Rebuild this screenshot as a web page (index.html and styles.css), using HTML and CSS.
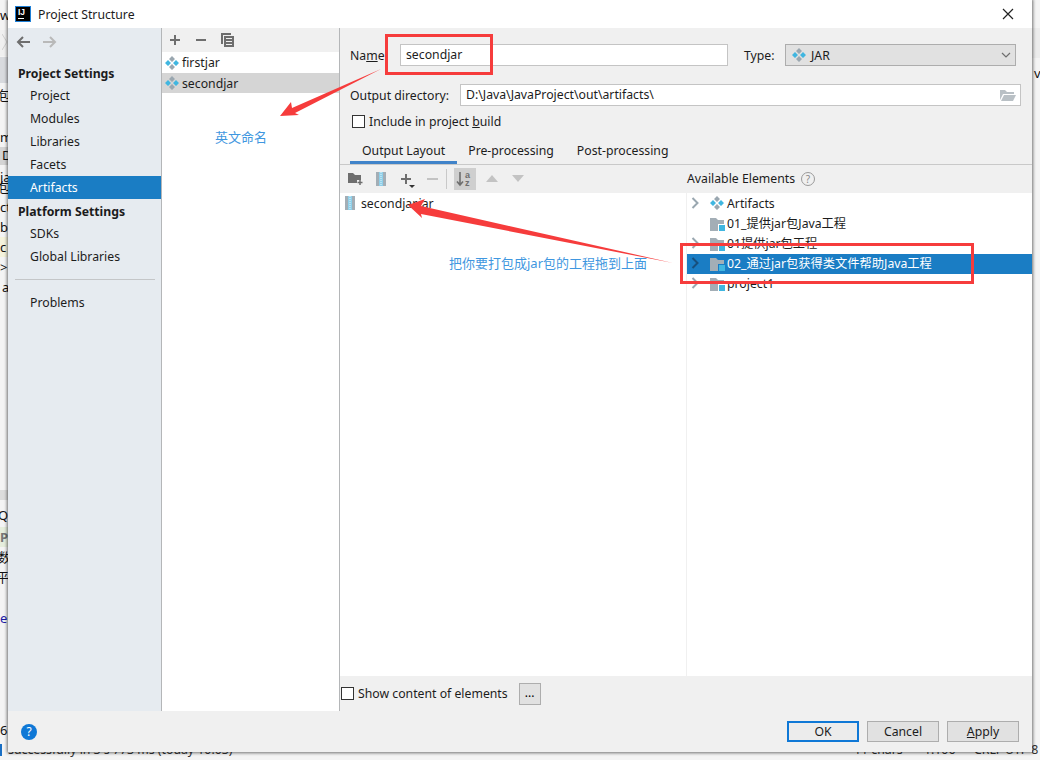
FILE: index.html
```html
<!DOCTYPE html>
<html lang="en">

<head>
    <meta charset="UTF-8">
    <meta name="viewport" content="width=device-width, initial-scale=1.0">
    <title>Project Structure</title>
    <link rel="stylesheet" href="styles.css">
</head>

<body>
    <svg class="defs" width="0" height="0">
        <symbol id="artifact" viewBox="0 0 14 14">
            <path fill="#9aa7b0" d="M7 0l3 3-3 3-3-3zM7 8l3 3-3 3-3-3z" />
            <path fill="#40b6e0" d="M3 4l3 3-3 3-3-3zM11 4l3 3-3 3-3-3z" />
        </symbol>
        <symbol id="module" viewBox="0 0 16 14">
            <path fill="#a3aeb6" d="M0 0h6l2 2h6v4H8v7H0z" />
            <path fill="#40b6e0" d="M9 7h6v6H9z" />
        </symbol>
        <symbol id="jar" viewBox="0 0 10 14">
            <path fill="#a3aeb6" d="M0 0h10v14H0z" />
            <path fill="#8fd0ea" d="M3 0h4v14H3z" />
            <path fill="none" stroke="#e8f4f8" stroke-dasharray="1 1" d="M5 0v14" />
        </symbol>
    </svg>

    <!-- bits of the window behind the dialog -->
    <div class="behind">
        <div class="strip strip-nav"></div>
        <div class="strip strip-tab"></div>
        <div class="strip strip-grey"></div>
        <div class="strip strip-cream"></div>
        <div class="strip strip-q"></div>
        <div class="strip strip-p"></div>
        <div class="strip strip-blue"></div>
        <div class="strip strip-right"></div>
        <svg class="nav-ghost" width="6" height="16" viewBox="0 0 6 16">
            <path fill="none" stroke="#cfcfcf" d="M0 0l5 8-5 8" />
        </svg>
        <span class="bit" style="left:0;top:7px">w</span>
        <span class="bit" style="left:-2px;top:87px">包</span>
        <span class="bit" style="left:0;top:129px">m</span>
        <span class="bit" style="left:2px;top:147px">D</span>
        <span class="bit bit-tight" style="left:0;top:172px">ja</span>
        <span class="bit bit-tight" style="left:-2px;top:182px">包</span>
        <span class="bit" style="left:0;top:199px">ct</span>
        <span class="bit" style="left:0;top:219px">b</span>
        <span class="bit" style="left:0;top:239px">c</span>
        <span class="bit" style="left:0;top:259px">&gt;</span>
        <span class="bit" style="left:2px;top:279px">a</span>
        <span class="bit" style="left:-2px;top:507px">Q</span>
        <span class="bit bit-p" style="left:0;top:529px">P</span>
        <span class="bit" style="left:-2px;top:549px">数</span>
        <span class="bit" style="left:-4px;top:569px">平</span>
        <span class="bit bit-link" style="left:0;top:610px">e</span>
        <span class="bit" style="left:0;top:722px">6:</span>
        <span class="bit" style="left:1034px;top:65px">va</span>
        <span class="bit status" style="left:8px;top:742px">successfully in 3 s 773 ms (today 10:03)</span>
        <span class="bit status" style="left:854px;top:742px">11 chars</span>
        <span class="bit status" style="left:924px;top:742px">1:106</span>
        <span class="bit status" style="left:974px;top:742px">CRLF</span>
        <span class="bit status" style="left:1005px;top:742px">UTF-8</span>
    </div>

    <div class="dialog">
        <div class="titlebar">
            <div class="logo"><span>IJ</span><i></i></div>
            <div class="title">Project Structure</div>
            <svg class="close" width="12" height="12" viewBox="0 0 12 12">
                <path fill="none" stroke="#222" stroke-width="1.200" d="M1 1l10 10M11 1L1 11" />
            </svg>
        </div>

        <div class="main">
            <div class="sidebar">
                <div class="nav-arrows">
                    <svg width="14" height="12" viewBox="0 0 14 12">
                        <path fill="none" stroke="#6e6e6e" stroke-width="2" d="M14 6H2M7 1L2 6l5 5" />
                    </svg>
                    <svg width="14" height="12" viewBox="0 0 14 12">
                        <path fill="none" stroke="#b9b9b9" stroke-width="2" d="M0 6h12M7 1l5 5-5 5" />
                    </svg>
                </div>
                <div class="side-head">Project Settings</div>
                <div class="side-item">Project</div>
                <div class="side-item">Modules</div>
                <div class="side-item">Libraries</div>
                <div class="side-item">Facets</div>
                <div class="side-item active">Artifacts</div>
                <div class="side-head">Platform Settings</div>
                <div class="side-item">SDKs</div>
                <div class="side-item">Global Libraries</div>
                <div class="side-sep"></div>
                <div class="side-item">Problems</div>
            </div>

            <div class="artifacts">
                <div class="mini-bar">
                    <svg width="12" height="12" viewBox="0 0 12 12">
                        <path fill="none" stroke="#6e6e6e" stroke-width="2" d="M6 1v10M1 6h10" />
                    </svg>
                    <svg width="12" height="12" viewBox="0 0 12 12">
                        <path fill="none" stroke="#6e6e6e" stroke-width="2" d="M1 6h10" />
                    </svg>
                    <svg width="13" height="14" viewBox="0 0 13 14">
                        <path fill="#6e6e6e" d="M0 0h10v2H2v9H0zM3 3h10v11H3z" />
                        <path fill="#f0f0f0" d="M5 5h6v1H5zM5 8h6v1H5zM5 11h6v1H5z" />
                    </svg>
                </div>
                <div class="artifact-list">
                    <div class="artifact-row first">
                        <svg class="ico"><use href="#artifact" /></svg>firstjar
                    </div>
                    <div class="artifact-row picked">
                        <svg class="ico"><use href="#artifact" /></svg>secondjar
                    </div>
                </div>
            </div>

            <div class="editor">
                <div class="form">
                    <div class="form-row">
                        <label class="name-label">Na<u>m</u>e:</label>
                        <div class="field name-field">secondjar</div>
                        <label class="type-label">Type:</label>
                        <div class="combo">
                            <svg class="ico"><use href="#artifact" /></svg>
                            <span>JAR</span>
                            <svg class="combo-arrow" width="10" height="6" viewBox="0 0 10 6">
                                <path fill="none" stroke="#6e6e6e" stroke-width="1.200" d="M1 1l4 4 4-4" />
                            </svg>
                        </div>
                    </div>
                    <div class="form-row">
                        <label class="dir-label">Output directory:</label>
                        <div class="field dir-field">
                            <span>D:\Java\JavaProject\out\artifacts\</span>
                            <svg width="16" height="12" viewBox="0 0 16 12">
                                <path fill="#b9c0c5" d="M0 1h5l2 2h7v2H3L0 11z" />
                                <path fill="#b9c0c5" d="M4 6h12l-3 6H1z" />
                            </svg>
                        </div>
                    </div>
                    <div class="check-row">
                        <span class="check"></span>
                        <label>Include in project <u>b</u>uild</label>
                    </div>
                </div>

                <div class="tabs">
                    <div class="tab current">Output Layout</div>
                    <div class="tab">Pre-processing</div>
                    <div class="tab">Post-processing</div>
                </div>

                <div class="layout-bars">
                    <div class="tools">
                        <svg width="15" height="12" viewBox="0 0 15 12">
                            <path fill="#6e6e6e" d="M0 0h5l2 2h6v5H9v3H0z" />
                            <path fill="none" stroke="#6e6e6e" stroke-width="1.500" d="M12 7v5M9.500 9.500h5" />
                        </svg>
                        <svg class="tool-jar"><use href="#jar" /></svg>
                        <svg class="tool-add" width="14" height="15" viewBox="0 0 14 15">
                            <path fill="none" stroke="#6e6e6e" stroke-width="2" d="M5 1v10M0 6h10" />
                            <path fill="#333" d="M8 12h6l-3 3z" />
                        </svg>
                        <svg class="tool-minus" width="11" height="2" viewBox="0 0 11 2">
                            <path fill="#c3c3c3" d="M0 0h11v2H0z" />
                        </svg>
                        <span class="tool-sep"></span>
                        <span class="sort-btn">
                            <svg width="18" height="16" viewBox="0 0 18 16">
                                <path fill="none" stroke="#6e6e6e" stroke-width="1.600" d="M4 1v13M1 10.500l3 3.500 3-3.500" />
                                <text x="9" y="7" class="sort-text">a</text>
                                <text x="9" y="15" class="sort-text">z</text>
                            </svg>
                        </span>
                        <svg class="tool-up" width="12" height="7" viewBox="0 0 12 7">
                            <path fill="#c3c3c3" d="M6 0l6 7H0z" />
                        </svg>
                        <svg class="tool-down" width="12" height="7" viewBox="0 0 12 7">
                            <path fill="#c3c3c3" d="M0 0h12L6 7z" />
                        </svg>
                    </div>
                    <div class="avail-head">
                        Available Elements
                        <span class="hint">?</span>
                    </div>
                </div>

                <div class="panes">
                    <div class="pane-left">
                        <div class="out-row">
                            <svg class="jar-ico"><use href="#jar" /></svg>secondjar.jar
                        </div>
                    </div>
                    <div class="pane-right">
                        <div class="tree-row">
                            <svg class="chev" viewBox="0 0 8 12"><path d="M1.500 1l5 5-5 5" /></svg>
                            <svg class="ico"><use href="#artifact" /></svg>Artifacts
                        </div>
                        <div class="tree-row">
                            <span class="chev"></span>
                            <svg class="folder"><use href="#module" /></svg>01_提供jar包Java工程
                        </div>
                        <div class="tree-row">
                            <svg class="chev" viewBox="0 0 8 12"><path d="M1.500 1l5 5-5 5" /></svg>
                            <svg class="folder"><use href="#module" /></svg>01提供jar包工程
                        </div>
                        <div class="tree-row selected">
                            <svg class="chev" viewBox="0 0 8 12"><path d="M1.500 1l5 5-5 5" /></svg>
                            <svg class="folder"><use href="#module" /></svg>02_通过jar包获得类文件帮助Java工程
                        </div>
                        <div class="tree-row">
                            <svg class="chev" viewBox="0 0 8 12"><path d="M1.500 1l5 5-5 5" /></svg>
                            <svg class="folder"><use href="#module" /></svg>project1
                        </div>
                    </div>
                </div>

                <div class="bottom-opts">
                    <span class="check"></span>
                    <label>Show content of elements</label>
                    <button class="dots">...</button>
                </div>
            </div>
        </div>

        <div class="footer">
            <div class="help">?</div>
            <div class="footer-btns">
                <button class="btn primary">OK</button>
                <button class="btn">Cancel</button>
                <button class="btn"><u>A</u>pply</button>
            </div>
        </div>
    </div>

    <!-- hand-drawn notes on top of the screenshot -->
    <div class="note note-name">英文命名</div>
    <div class="note note-drag">把你要打包成jar包的工程拖到上面</div>
    <div class="mark mark-name"></div>
    <div class="mark mark-row"></div>
    <svg class="arrows" width="1040" height="760" viewBox="0 0 1040 760">
        <path fill="#f63c3c" d="M381 69L295 113 299 115 280 116 291 102 292 108z" />
        <path fill="#f63c3c" d="M408 205L425 199 421 206 673 263 421 214 422 218z" />
    </svg>
</body>

</html>
```

FILE: styles.css
```css
* {
    box-sizing: border-box;
}

body {
    position: relative;
    width: 1040px;
    height: 760px;
    margin: 0;
    overflow: hidden;
    background-color: #f4f4f4;
    font-family: "Noto Sans", "Noto Sans CJK SC", sans-serif;
    font-size: 12.25px;
    color: #1c1c1c;
}

.defs {
    position: absolute;
}

/* window behind */
.strip {
    position: absolute;
    left: 0;
    width: 8px;
}

.strip-nav {
    top: 30px;
    height: 26px;
    background-color: #f0f0f0;
}

.strip-tab {
    top: 57px;
    height: 26px;
    background-color: #d8dade;
}

.strip-grey {
    top: 147px;
    height: 18px;
    background-color: #d4d4d4;
}

.strip-cream {
    top: 237px;
    height: 20px;
    background-color: #f5f3dc;
}

.strip-q {
    top: 490px;
    height: 10px;
    background-color: #dcdcdc;
}

.strip-p {
    top: 527px;
    height: 20px;
    background-color: #e6eedd;
}

.strip-blue {
    top: 744px;
    height: 12px;
    width: 2px;
    background-color: #1a6fc4;
}

.strip-right {
    left: 1032px;
    top: 28px;
    height: 30px;
    background-color: #ececec;
}

.nav-ghost {
    position: absolute;
    left: 2px;
    top: 34px;
}

.bit {
    position: absolute;
    white-space: nowrap;
    font-size: 13px;
    line-height: 16px;
    color: #111;
}

.bit-tight {
    line-height: 10px;
}

.bit-link {
    color: #1a1aa6;
}

.bit-p {
    color: #777;
    font-weight: bold;
}

.status {
    font-size: 12.3px;
    color: #333;
}

/* dialog */
.dialog {
    position: absolute;
    left: 8px;
    top: 0;
    display: flex;
    flex-direction: column;
    width: 1024px;
    height: 752px;
    background-color: #f0f0f0;
    box-shadow: 0 0 3px 1px rgba(0, 0, 0, 0.55);
}

.titlebar {
    display: flex;
    align-items: center;
    height: 28px;
    padding-left: 7px;
    background-color: #fff;
}

.logo {
    display: flex;
    flex-direction: column;
    width: 16px;
    height: 16px;
    padding: 2px 0 0 2px;
    background-color: #000;
    border: 1px solid #1e7fd6;
    color: #fff;
    font-family: "Liberation Sans", sans-serif;
    font-size: 8.5px;
    font-weight: bold;
    line-height: 7px;
}

.logo i {
    width: 6px;
    height: 1px;
    margin-top: 2px;
    background-color: #fff;
}

.title {
    margin-left: 7px;
    flex: 1;
}

.close {
    margin-right: 18px;
}

.main {
    display: flex;
    height: 683px;
}

.sidebar {
    width: 154px;
    padding-top: 8px;
    background-color: #e6ebf0;
    border-right: 1px solid #b4b6b8;
}

.nav-arrows {
    display: flex;
    gap: 13px;
    height: 13px;
    padding-left: 8px;
    margin-bottom: 12px;
}

.side-head {
    height: 23px;
    padding: 2px 0 0 10px;
    font-weight: 700;
    line-height: 21px;
}

.side-item {
    height: 23px;
    padding-left: 22px;
    line-height: 23px;
}

.side-item.active {
    background-color: #1a7dc4;
    color: #fff;
}

.side-sep {
    height: 1px;
    margin: 11px 6px 11px 7px;
    background-color: #c4c6c8;
}

.artifacts {
    width: 178px;
    border-right: 1px solid #b4b6b8;
}

.mini-bar {
    display: flex;
    align-items: center;
    gap: 14px;
    height: 24px;
    padding-left: 7px;
}

.artifact-list {
    height: 659px;
    background-color: #fff;
}

.artifact-row {
    display: flex;
    align-items: center;
    gap: 3px;
    height: 20px;
    padding-left: 3px;
}

.artifact-row.first {
    height: 21px;
}

.artifact-row.picked {
    background-color: #d5d5d5;
}

.ico {
    flex: none;
    width: 14px;
    height: 14px;
}

.editor {
    display: flex;
    flex-direction: column;
    width: 692px;
}

.form {
    height: 109px;
    padding: 16px 11px 0 10px;
}

.form-row {
    display: flex;
    align-items: center;
    height: 22px;
    margin-bottom: 18px;
}

.name-label {
    width: 50px;
}

.field {
    height: 22px;
    padding-left: 5px;
    background-color: #fff;
    border: 1px solid #c4c4c4;
    line-height: 20px;
}

.name-field {
    width: 328px;
}

.type-label {
    margin-left: 16px;
    width: 41px;
}

.combo {
    display: flex;
    align-items: center;
    gap: 5px;
    width: 231px;
    height: 22px;
    padding-left: 6px;
    background-color: #e1e1e1;
    border: 1px solid #adadad;
}

.combo-arrow {
    margin-left: auto;
    margin-right: 4px;
}

.dir-label {
    width: 110px;
}

.dir-field {
    display: flex;
    align-items: center;
    justify-content: space-between;
    width: 561px;
    padding-right: 4px;
}

.check-row {
    display: flex;
    align-items: center;
    gap: 4px;
    margin-top: -11px;
    padding-left: 2px;
}

.check {
    flex: none;
    width: 13px;
    height: 13px;
    background-color: #fff;
    border: 1px solid #333;
}

.tabs {
    display: flex;
    height: 28px;
    padding-left: 10px;
    border-bottom: 1px solid #c9c9c9;
}

.tab {
    height: 27px;
    padding: 5px 12px 0;
    line-height: 18px;
    margin-left: -1px;
}

.tab.current {
    margin-left: 0;
    border-bottom: 3px solid #4083c9;
}

.layout-bars {
    display: flex;
    align-items: center;
    height: 28px;
    padding-bottom: 1px;
}

.tools {
    display: flex;
    align-items: center;
    width: 347px;
    padding-left: 8px;
}

.tool-jar {
    width: 10px;
    height: 14px;
    margin-left: 13px;
}

.tool-add {
    margin-left: 15px;
    margin-top: 3px;
}

.tool-minus {
    margin-left: 12px;
}

.tool-sep {
    width: 1px;
    height: 20px;
    margin-left: 8px;
    margin-right: 7px;
    background-color: #c9c9c9;
}

.sort-btn {
    display: flex;
    align-items: center;
    justify-content: center;
    width: 22px;
    height: 22px;
    background-color: #cfcfcf;
}

.sort-text {
    font-family: "Liberation Sans", sans-serif;
    font-size: 9px;
    font-weight: bold;
    fill: #6e6e6e;
}

.tool-up {
    margin-left: 10px;
}

.tool-down {
    margin-left: 14px;
}

.avail-head {
    display: flex;
    align-items: center;
    gap: 6px;
}

.hint {
    width: 14px;
    height: 14px;
    border: 1px solid #9a9a9a;
    border-radius: 50%;
    color: #8a8a8a;
    font-size: 10px;
    line-height: 12px;
    text-align: center;
}

.panes {
    display: flex;
    height: 483px;
    background-color: #fff;
}

.pane-left {
    width: 347px;
    border-right: 1px solid #f0f0f0;
}

.out-row {
    display: flex;
    align-items: center;
    gap: 6px;
    height: 20px;
    padding-left: 5px;
}

.jar-ico {
    width: 10px;
    height: 14px;
}

.pane-right {
    flex: 1;
    padding-top: 1px;
}

.tree-row {
    display: flex;
    align-items: center;
    height: 20px;
    padding: 0 0 2px 4px;
    white-space: nowrap;
}

.tree-row.selected {
    background-color: #1a7dc4;
    color: #fff;
}

.chev {
    flex: none;
    width: 8px;
    height: 12px;
    margin-right: 11px;
    fill: none;
    stroke: #9aa7b0;
    stroke-width: 2;
}

.tree-row.selected .chev {
    stroke: #174f7c;
}

.tree-row .ico {
    margin-right: 3px;
}

.folder {
    flex: none;
    width: 16px;
    height: 14px;
    margin-top: 3px;
    margin-right: 1px;
}

.bottom-opts {
    display: flex;
    align-items: center;
    height: 35px;
    padding: 0 0 0 1px;
}

.bottom-opts label {
    margin-left: 4px;
}

.dots {
    width: 22px;
    height: 22px;
    margin-left: 11px;
    padding: 0 0 4px;
    background-color: #e1e1e1;
    border: 1px solid #adadad;
    font-family: inherit;
    font-size: 12px;
}

.footer {
    display: flex;
    align-items: center;
    justify-content: space-between;
    height: 41px;
    padding: 0 13px 0 13px;
}

.help {
    width: 16px;
    height: 16px;
    border-radius: 50%;
    background-color: #0f78d6;
    color: #fff;
    font-size: 12px;
    line-height: 16px;
    text-align: center;
}

.footer-btns {
    display: flex;
    gap: 8px;
}

.btn {
    width: 72px;
    height: 21px;
    padding: 0;
    background-color: #e1e1e1;
    border: 1px solid #adadad;
    font-family: inherit;
    font-size: 12.25px;
    color: #1c1c1c;
}

.btn.primary {
    border: 2px solid #0f78d6;
    background-color: #ececec;
}

/* notes drawn over the shot */
.note {
    position: absolute;
    color: #3f97e0;
    font-size: 13px;
    line-height: 16px;
    white-space: nowrap;
}

.note-name {
    left: 215px;
    top: 129px;
}

.note-drag {
    left: 449px;
    top: 255px;
}

.mark {
    position: absolute;
    border: 3px solid #f63c3c;
}

.mark-name {
    left: 385px;
    top: 34px;
    width: 108px;
    height: 41px;
}

.mark-row {
    left: 680px;
    top: 243px;
    width: 294px;
    height: 41px;
}

.arrows {
    position: absolute;
    left: 0;
    top: 0;
}
```
